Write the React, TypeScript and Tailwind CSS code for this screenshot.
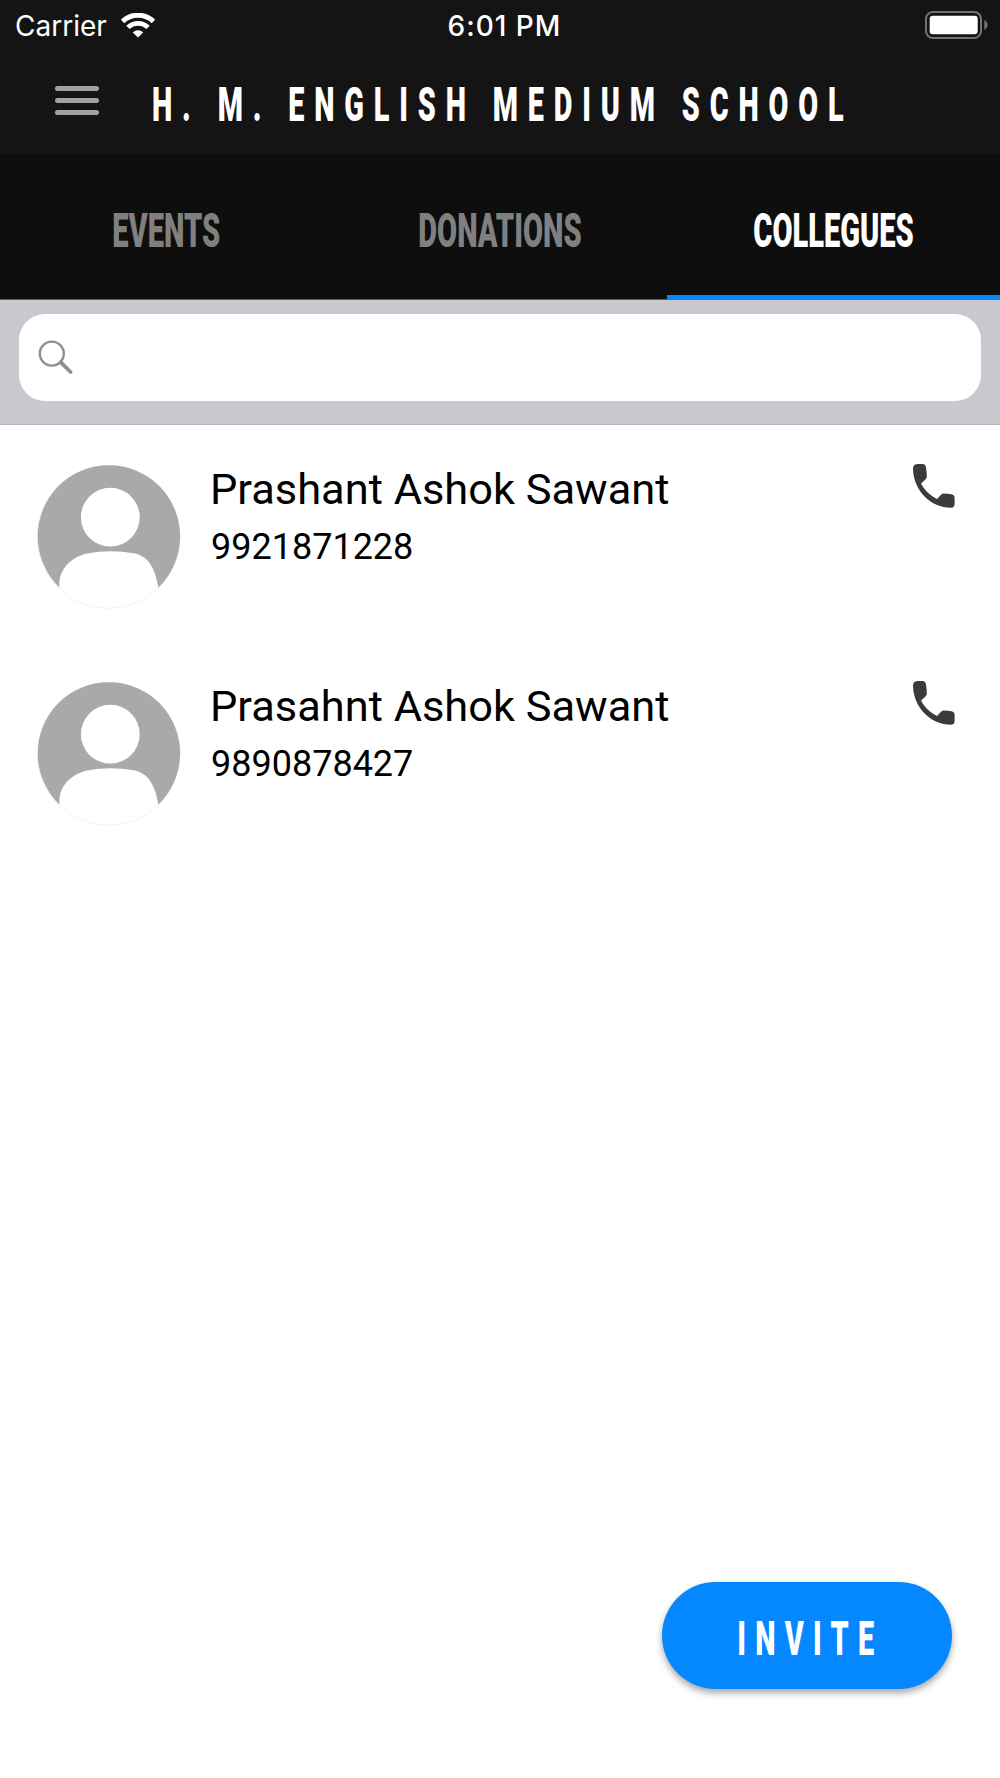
import { useState } from 'react'

type Contact = {
  id: number
  name: string
  phone: string
}

type Tab = {
  id: string
  label: string
}

const tabs: Tab[] = [
  { id: 'events', label: 'EVENTS' },
  { id: 'donations', label: 'DONATIONS' },
  { id: 'collegues', label: 'COLLEGUES' },
]

const contacts: Contact[] = [
  { id: 1, name: 'Prashant Ashok Sawant', phone: '9921871228' },
  { id: 2, name: 'Prasahnt Ashok Sawant', phone: '9890878427' },
]

function WifiIcon() {
  return (
    <svg width="34" height="25" viewBox="0 0 34 25" fill="none" stroke="#fff">
      <path d="M1.5 8.4 A22.5 22.5 0 0 1 32.5 8.4" strokeWidth="5" />
      <path d="M6.9 14.4 A14.5 14.5 0 0 1 27.1 14.4" strokeWidth="4.8" />
      <path d="M17 24.5 L11.8 19.4 A7.6 7.6 0 0 1 22.2 19.4 Z" fill="#fff" stroke="none" />
    </svg>
  )
}

function BatteryIcon() {
  return (
    <svg width="63" height="28" viewBox="0 0 63 28">
      <rect x="1" y="1" width="55" height="26" rx="7" fill="none" stroke="#727272" strokeWidth="2" />
      <rect x="4.7" y="4.7" width="48" height="18.6" rx="3" fill="#fff" />
      <path d="M59.3 9 Q62.6 11 62.6 14 Q62.6 17 59.3 19 Z" fill="#727272" />
    </svg>
  )
}

function SearchIcon() {
  return (
    <svg width="36" height="36" viewBox="0 0 36 36" fill="none" stroke="#8e8e93">
      <circle cx="13.8" cy="13.6" r="12" strokeWidth="2.4" />
      <path d="M22.6 22.2 L32.6 32" strokeWidth="3.8" strokeLinecap="round" />
    </svg>
  )
}

function PhoneIcon() {
  return (
    <svg width="42" height="44" viewBox="0 0 42 44" fill="#3b3b3b">
      <path d="M4.5 0 H9.5 Q12.3 0 12.9 3 Q13.8 8 13.8 12.5 Q13.8 14 12.7 15.2 L8.1 19.6 C11.5 26.5 17 31.6 24 35 L28 30.8 Q29.2 29.5 31 29.5 Q35 29.5 38.5 30.3 Q41.6 31 41.6 34 V39.8 Q41.6 43.7 38 43.8 C18 43.6 0.3 27 0 4.5 Q0 0.3 4.5 0 Z" />
    </svg>
  )
}

function Avatar() {
  return (
    <svg width="144" height="145" viewBox="0 0 144 145">
      <circle cx="71.6" cy="72.8" r="71.4" fill="#fff" stroke="#ededed" strokeWidth="0.7" />
      <path d="M22.5 123.6 A71.2 71.2 0 1 1 121.3 123.6 C118.5 106 112.5 93 98 89.6 Q73 84.8 50 89.6 C32 94 21 107 22.5 123.6 Z" fill="#a9a9a9" />
      <circle cx="73.3" cy="53.2" r="29.4" fill="#fff" />
    </svg>
  )
}

function StatusBar() {
  return (
    <div className="grid h-[50px] grid-cols-3 items-center pr-[12px] pl-[15px] font-[Inter,sans-serif] text-[28px] leading-none text-white">
      <div className="flex items-center gap-[14px]">
        <span className="pt-[2px]">Carrier</span>
        <WifiIcon />
      </div>
      <span className="pt-[2px] pl-[6px] text-center font-medium tracking-[1px]">6:01 PM</span>
      <div className="flex justify-end pb-[1px]">
        <BatteryIcon />
      </div>
    </div>
  )
}

function ContactRow({ contact }: { contact: Contact }) {
  return (
    <li className="flex h-[217px] items-start pr-[45px] pl-[37px]">
      <div className="pt-[39px]">
        <Avatar />
      </div>
      <div className="ml-[29px] flex-1 pt-[40px] font-[Roboto,sans-serif] text-black">
        <p className="text-[43.4px] leading-[50px]">{contact.name}</p>
        <p className="mt-[11px] pl-px text-[36px] leading-[42px]">{contact.phone}</p>
      </div>
      <button type="button" className="pt-[39px]" aria-label={`Call ${contact.name}`}>
        <PhoneIcon />
      </button>
    </li>
  )
}

export default function App() {
  const [activeTab, setActiveTab] = useState('collegues')

  return (
    <div className="flex h-[1778px] w-[1000px] flex-col overflow-hidden bg-white">
      <header className="h-[154px] bg-[#141414]">
        <StatusBar />
        <div className="flex h-[104px] items-start">
          <button type="button" className="mt-[36px] ml-[55px] flex w-11 flex-col gap-[7px]" aria-label="Menu">
            <span className="h-[5px] rounded-full bg-[#a1a1a1]" />
            <span className="h-[5px] rounded-full bg-[#a1a1a1]" />
            <span className="h-[5px] rounded-full bg-[#a1a1a1]" />
          </button>
          <h1 className="mt-[27px] ml-[53px] w-[700px] origin-left scale-x-[0.6] font-[Roboto,sans-serif] text-[48px] leading-[56px] font-black tracking-[16.4px] whitespace-nowrap text-white">
            H. M. ENGLISH MEDIUM SCHOOL
          </h1>
        </div>
      </header>

      <nav className="grid h-[146px] grid-cols-3 bg-[#0e0e0e] shadow-[inset_0_-1px_0_#5a5a5e]">
        {tabs.map((tab) => (
          <button
            key={tab.id}
            type="button"
            onClick={() => setActiveTab(tab.id)}
            className={`flex items-center justify-center border-b-[5px] pt-[12px] ${tab.id === activeTab ? 'border-[#0487ff] text-white' : 'border-transparent text-[#808080]'}`}
          >
            <span className="scale-x-[0.605] font-[Roboto,sans-serif] text-[48px] leading-[56px] font-black">{tab.label}</span>
          </button>
        ))}
      </nav>

      <div className="h-[125px] border-b border-[#b4b4b8] bg-[#c9c8ce] px-[19px] pt-[14px]">
        <div className="flex h-[87px] items-center rounded-[26px] bg-white pl-[19px]">
          <SearchIcon />
        </div>
      </div>

      <ul className="flex-1">
        {contacts.map((contact) => (
          <ContactRow key={contact.id} contact={contact} />
        ))}
      </ul>

      <div className="flex justify-end pr-[48px] pb-[89px]">
        <button type="button" className="flex h-[107px] w-[290px] items-center justify-center rounded-full bg-[#0487ff] shadow-[0_4px_7px_rgba(0,0,0,0.35)]">
          <span className="scale-x-[0.6] pt-[7px] pl-[12px] font-[Roboto,sans-serif] text-[48px] leading-[56px] font-black tracking-[15.4px] text-white">INVITE</span>
        </button>
      </div>
    </div>
  )
}
